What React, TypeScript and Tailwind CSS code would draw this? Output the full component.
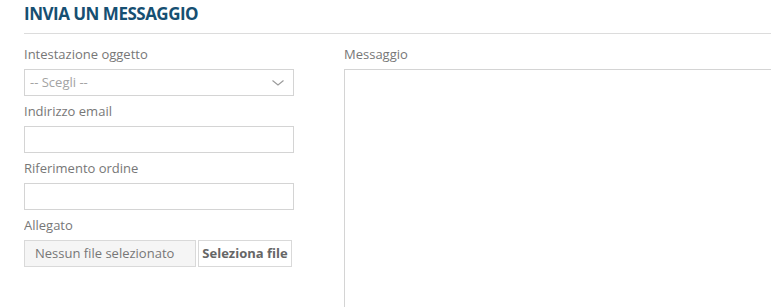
import React from "react";

const font = { fontFamily: '"Open Sans", "Liberation Sans", sans-serif' };

function Label({ children }: { children: React.ReactNode }) {
  return <div className="text-[13px] leading-[18px] text-[#777] mb-[6px]">{children}</div>;
}

function Field({ label, children }: { label: string; children: React.ReactNode }) {
  return (
    <div className="mb-[6px]">
      <Label>{label}</Label>
      {children}
    </div>
  );
}

export default function App() {
  return (
    <div className="w-[772px] h-[307px] overflow-hidden bg-white" style={font}>
      <div className="ml-[24px] w-[747px] overflow-hidden">
        <div className="pt-[2px] pb-[7px] border-b border-[#dcdcdc]">
          <h2 className="text-[17px] leading-[24px] font-bold text-[#164f72] tracking-[-0.5px]">INVIA UN MESSAGGIO</h2>
        </div>
        <div className="flex gap-[50px] mt-[11px]">
          <div className="w-[270px] shrink-0">
            <Field label="Intestazione oggetto">
              <div className="h-[27px] border border-[#d4d4d4] flex items-center justify-between pl-[5px] pr-[8px]">
                <span className="text-[13px] text-[#a3a3a3]">-- Scegli --</span>
                <svg width="12" height="6" viewBox="0 0 12 6" fill="none" className="mr-[1px]">
                  <path d="M0.5 0.5 L6 5 L11.5 0.5" stroke="#9a9a9a" strokeWidth="1.1" />
                </svg>
              </div>
            </Field>
            <Field label="Indirizzo email">
              <div className="h-[27px] border border-[#d4d4d4]" />
            </Field>
            <Field label="Riferimento ordine">
              <div className="h-[27px] border border-[#d4d4d4]" />
            </Field>
            <Field label="Allegato">
              <div className="flex gap-[2px] h-[27px]">
                <div className="w-[172px] border border-[#d9d9d9] bg-[#f5f5f5] flex items-center pl-[10px] text-[13px] text-[#777]">
                  Nessun file selezionato
                </div>
                <div className="w-[94px] border border-[#d9d9d9] bg-white flex items-center justify-center text-[13px] font-bold text-[#666]">
                  Seleziona file
                </div>
              </div>
            </Field>
          </div>
          <div className="flex-1 min-w-0">
            <Label>Messaggio</Label>
            <div className="w-[500px] h-[300px] border border-[#d4d4d4]" />
          </div>
        </div>
      </div>
    </div>
  );
}
